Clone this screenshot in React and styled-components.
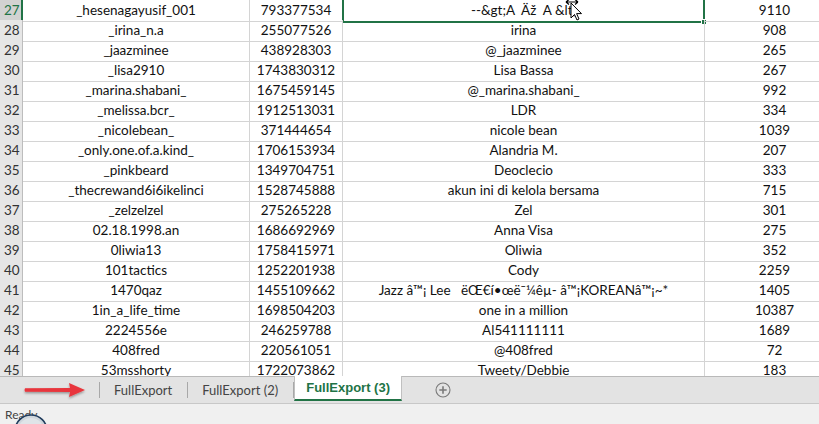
import React from "react";
import styled, { createGlobalStyle } from "styled-components";

const Global = createGlobalStyle`
  html, body { margin: 0; padding: 0; background: #fff; overflow: hidden; }
  #root { width: 819px; height: 424px; }
`;

const FONT = `Lato, "Open Sans", sans-serif`;

const Frame = styled.div`
  position: relative;
  width: 819px;
  height: 424px;
  display: flex;
  flex-direction: column;
  overflow: hidden;
  font-family: ${FONT};
  background: #fff;
`;

const Sheet = styled.div`
  height: 376px;
  overflow: hidden;
  flex: none;
`;

const Row = styled.div`
  display: grid;
  grid-template-columns: 23px 227px 93px 362px 140px;
  height: 20px;
`;

const RowHead = styled.div`
  box-sizing: border-box;
  background: ${(p) => (p.$active ? "#d2d2d2" : "#e6e6e6")};
  color: ${(p) => (p.$active ? "#217346" : "#333")};
  border-bottom: 1px solid #c3c3c3;
  border-right: ${(p) => (p.$active ? "2px solid #217346" : "1px solid #bdbdbd")};
  font-size: 13.5px;
  line-height: 20px;
  padding-left: 4px;
  text-align: left;
`;

const Cell = styled.div`
  position: relative;
  box-sizing: border-box;
  border-right: 1px solid #d4d4d4;
  border-bottom: 1px solid #d4d4d4;
  font-size: 13.5px;
  line-height: 21px;
  color: #111;
  text-align: center;
  white-space: pre;
  overflow: visible;
`;

const Selection = styled.div`
  position: absolute;
  left: -1px;
  top: -6px;
  right: -1px;
  bottom: -2px;
  border: 2px solid #217346;
  pointer-events: none;
`;

const FillHandle = styled.div`
  position: absolute;
  right: -4px;
  bottom: -4px;
  width: 6px;
  height: 6px;
  background: #217346;
  border: 1px solid #fff;
  box-sizing: border-box;
`;

const TabBar = styled.div`
  height: 28px;
  box-sizing: border-box;
  background: #e3e3e3;
  border-top: 1px solid #b9b9b9;
  border-bottom: 1px solid #c8c8c8;
  display: flex;
  align-items: stretch;
  flex: none;
`;

const NavArea = styled.div`
  width: 99px;
  display: flex;
  align-items: center;
  padding-left: 22px;
  box-sizing: border-box;
`;

const Sep = styled.div`
  width: 1px;
  background: #a8a8a8;
  margin: 5px 0 5px;
`;

const Tab = styled.div`
  box-sizing: border-box;
  padding: ${(p) => (p.$active ? "0 11px" : "0 15px 0 14px")};
  display: flex;
  align-items: center;
  font-family: ${(p) => (p.$active ? `"Liberation Sans", Arial, sans-serif` : FONT)};
  font-size: 13px;
  color: ${(p) => (p.$active ? "#217346" : "#444")};
  font-weight: ${(p) => (p.$active ? 700 : 400)};
  background: ${(p) => (p.$active ? "#fff" : "transparent")};
  margin-top: ${(p) => (p.$active ? "-1px" : "0")};
  border-bottom: ${(p) => (p.$active ? "2px solid #217346" : "none")};
  border-left: ${(p) => (p.$active ? "1px solid #c0c0c0" : "none")};
  border-right: ${(p) => (p.$active ? "1px solid #c0c0c0" : "none")};
  margin-bottom: ${(p) => (p.$active ? "2px" : "0")};
`;

const AddButton = styled.div`
  margin-left: 33px;
  display: flex;
  align-items: center;
`;

const StatusBar = styled.div`
  flex: 1;
  background: #f0f0f0;
  font-size: 12px;
  color: #444;
  padding: 3px 0 0 5px;
  box-sizing: border-box;
`;

const Overlay = styled.svg`
  position: absolute;
  pointer-events: none;
`;

const rows = [
  [27, "_hesenagayusif_001", "793377534", "--&gt;A  Äž  A &lt;", "9110"],
  [28, "_irina_n.a", "255077526", "irina", "908"],
  [29, "_jaazminee", "438928303", "@_jaazminee", "265"],
  [30, "_lisa2910", "1743830312", "Lisa Bassa", "267"],
  [31, "_marina.shabani_", "1675459145", "@_marina.shabani_", "992"],
  [32, "_melissa.bcr_", "1912513031", "LDR", "334"],
  [33, "_nicolebean_", "371444654", "nicole bean", "1039"],
  [34, "_only.one.of.a.kind_", "1706153934", "Alandria M.", "207"],
  [35, "_pinkbeard", "1349704751", "Deoclecio", "333"],
  [36, "_thecrewand6i6ikelinci", "1528745888", "akun ini di kelola bersama", "715"],
  [37, "_zelzelzel", "275265228", "Zel", "301"],
  [38, "02.18.1998.an", "1686692969", "Anna Visa", "275"],
  [39, "0liwia13", "1758415971", "Oliwia", "352"],
  [40, "101tactics", "1252201938", "Cody", "2259"],
  [41, "1470qaz", "1455109662", "Jazz â™¡ Lee   ëŒ€í•œë¯¼êµ- â™¡KOREANâ™¡~*", "1405"],
  [42, "1in_a_life_time", "1698504203", "one in a million", "10387"],
  [43, "2224556e", "246259788", "Al541111111", "1689"],
  [44, "408fred", "220561051", "@408fred", "72"],
  [45, "53msshorty", "1722073862", "Tweety/Debbie", "183"],
];

function RedArrow() {
  return (
    <svg width="66" height="20" viewBox="0 0 66 20">
      <defs>
        <filter id="sh" x="-20%" y="-50%" width="140%" height="200%">
          <feDropShadow dx="0" dy="1.5" stdDeviation="1.2" floodColor="#000" floodOpacity="0.35" />
        </filter>
      </defs>
      <path
        d="M3 8.2 Q2 10 3 11.8 L48 12 L47 17 L63 10 L47 3 L48 8 Z"
        fill="#e8363c"
        filter="url(#sh)"
      />
    </svg>
  );
}

function PlusIcon() {
  return (
    <svg width="16" height="16" viewBox="0 0 16 16">
      <circle cx="8" cy="8" r="7" fill="none" stroke="#7a7a7a" strokeWidth="1.1" />
      <path d="M8 4.3v7.4M4.3 8h7.4" stroke="#7a7a7a" strokeWidth="1.6" />
    </svg>
  );
}

export default function App() {
  return (
    <Frame>
      <Global />
      <Sheet>
        {rows.map(([n, a, b, c, d], i) => (
          <Row key={n}>
            <RowHead $active={i === 0}>{n}</RowHead>
            <Cell>{a}</Cell>
            <Cell>{b}</Cell>
            <Cell>
              {c}
              {i === 0 && (
                <Selection>
                  <FillHandle />
                </Selection>
              )}
            </Cell>
            <Cell>{d}</Cell>
          </Row>
        ))}
      </Sheet>
      <TabBar>
        <NavArea>
          <RedArrow />
        </NavArea>
        <Sep />
        <Tab>FullExport</Tab>
        <Sep />
        <Tab>FullExport (2)</Tab>
        <Sep />
        <Tab $active>FullExport (3)</Tab>
        <AddButton>
          <PlusIcon />
        </AddButton>
      </TabBar>
      <StatusBar>Ready</StatusBar>
      <Overlay width="40" height="14" viewBox="0 0 40 14" style={{ left: 11, top: 410 }}>
        <circle cx="20" cy="21" r="16" fill="#cfd6dc" stroke="#1f3b5c" strokeWidth="1.6" />
        <circle cx="20" cy="21" r="13" fill="#dfe4e8" />
      </Overlay>
      <Overlay width="24" height="24" viewBox="0 0 24 24" style={{ left: 562, top: -1 }}>
        <path d="M4 3 L16 3 M4 3 L7 0.5 M4 3 L7 5.5 M16 3 L13 0.5 M16 3 L13 5.5" stroke="#000" strokeWidth="1.2" fill="none" />
        <path
          d="M9 4 L9 19 L12.5 15.5 L15 21 L17 20 L14.6 14.6 L19.5 14.6 Z"
          fill="#fff"
          stroke="#000"
          strokeWidth="1"
          strokeLinejoin="round"
        />
      </Overlay>
    </Frame>
  );
}
